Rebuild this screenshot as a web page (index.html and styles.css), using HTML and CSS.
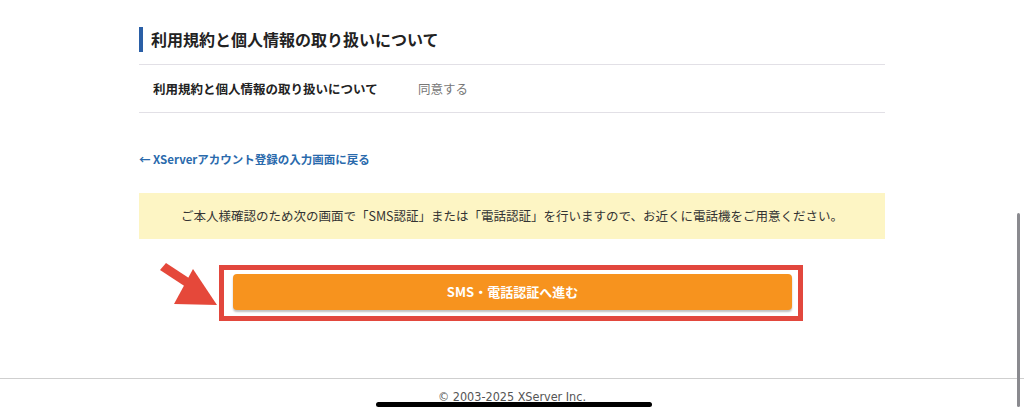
FILE: index.html
```html
<!DOCTYPE html>
<html lang="ja">
<head>
<meta charset="UTF-8">
<meta name="viewport" content="width=device-width, initial-scale=1.0">
<title>確認画面</title>
<link rel="stylesheet" href="styles.css">
</head>
<body>
<div id="page">
    <main class="content">
        <h2 class="heading">利用規約と個人情報の取り扱いについて</h2>
        <dl class="row">
            <dt>利用規約と個人情報の取り扱いについて</dt>
            <dd>同意する</dd>
        </dl>
        <a href="javascript:;" class="back">← XServerアカウント登録の入力画面に戻る</a>
        <p class="notice">ご本人様確認のため次の画面で「SMS認証」または「電話認証」を行いますので、お近くに電話機をご用意ください。</p>
        <div class="action">
            <svg class="pointer" width="80" height="50" viewBox="0 0 80 50">
                <polygon points="11,7 17,0 49,21 43,28" fill="#e5483a"/>
                <polygon points="44,6 25,41 68,42" fill="#e5483a"/>
            </svg>
            <div class="mark">
                <a href="javascript:;" class="submit">SMS・電話認証へ進む</a>
            </div>
        </div>
    </main>
    <footer class="footer">© 2003-2025 XServer Inc.</footer>
</div>
<div class="scrollbar"></div>
<div class="home-bar"></div>
</body>
</html>
```

FILE: styles.css
```css
html, body {
    margin: 0;
    padding: 0;
}
body {
    background: #fff;
    color: #333;
    font-family: "Noto Sans CJK JP", "Noto Sans", sans-serif;
    overflow: hidden;
}
.content {
    width: 746px;
    margin: 0 auto;
    padding-top: 27px;
}
.heading {
    margin: 0;
    padding-left: 8px;
    border-left: 4px solid #2a5fa6;
    font-size: 16px;
    font-weight: bold;
    line-height: 25px;
    color: #222;
}
.row {
    display: flex;
    align-items: center;
    height: 47px;
    margin: 12px 0 0;
    padding-left: 14px;
    border-top: 1px solid #e2e0e6;
    border-bottom: 1px solid #e2e0e6;
    font-size: 12.5px;
}
.row dt {
    width: 265px;
    font-weight: bold;
    color: #222;
}
.row dd {
    margin: 0;
    color: #777;
}
.back {
    display: block;
    margin-top: 38px;
    font-size: 11.5px;
    font-weight: bold;
    line-height: 16px;
    color: #2a6aac;
    text-decoration: none;
}
.notice {
    margin: 26px 0 0;
    height: 46px;
    background: #fdf5c4;
    font-size: 12.5px;
    line-height: 46px;
    text-align: center;
    color: #333;
}
.action {
    position: relative;
    display: flex;
    justify-content: center;
    margin-top: 26px;
}
.pointer {
    position: absolute;
    left: 10px;
    top: -2px;
}
.mark {
    box-sizing: border-box;
    width: 584px;
    margin-left: -2px;
    padding: 4px 6px 6px 9px;
    border: 5px solid #e2473d;
}
.submit {
    display: block;
    height: 36px;
    border-radius: 4px;
    background: #f7931e;
    box-shadow: 0 2px 2px rgba(0, 0, 0, .25);
    color: #fff;
    font-size: 13px;
    font-weight: bold;
    line-height: 36px;
    text-align: center;
    text-decoration: none;
}
.footer {
    margin-top: 57px;
    padding-top: 10px;
    border-top: 1px solid #cfcfcf;
    font-family: "DejaVu Sans Condensed", "Liberation Sans", sans-serif;
    font-size: 12.5px;
    line-height: 16px;
    text-align: center;
    color: #555;
}
.scrollbar {
    position: fixed;
    right: 4px;
    top: 213px;
    width: 3px;
    height: 194px;
    border-radius: 2px;
    background: #8a8a8f;
}
.home-bar {
    position: fixed;
    left: 376px;
    top: 402px;
    width: 276px;
    height: 5px;
    border-radius: 3px;
    background: #000;
}
```
